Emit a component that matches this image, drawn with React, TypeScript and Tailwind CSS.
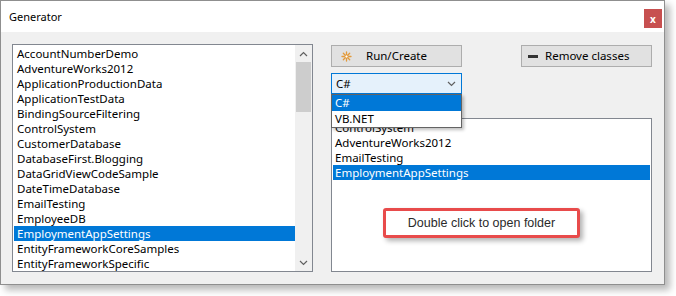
const leftItems = [
  "AccountNumberDemo",
  "AdventureWorks2012",
  "ApplicationProductionData",
  "ApplicationTestData",
  "BindingSourceFiltering",
  "ControlSystem",
  "CustomerDatabase",
  "DatabaseFirst.Blogging",
  "DataGridViewCodeSample",
  "DateTimeDatabase",
  "EmailTesting",
  "EmployeeDB",
  "EmploymentAppSettings",
  "EntityFrameworkCoreSamples",
  "EntityFrameworkSpecific",
];

const rightItems = ["ControlSystem", "AdventureWorks2012", "EmailTesting", "EmploymentAppSettings"];

const SELECTED = "EmploymentAppSettings";

const Chevron = ({ up = false }: { up?: boolean }) => (
  <svg width="9" height="6" viewBox="0 0 9 6" className={up ? "rotate-180" : ""}>
    <path d="M1 1 L4.5 4.5 L8 1" fill="none" stroke="#606060" strokeWidth="1.2" />
  </svg>
);

const Spark = () => (
  <svg width="11" height="11" viewBox="0 0 11 11">
    <g stroke="#e39a3b" strokeWidth="1.3" strokeLinecap="round">
      <path d="M5.5 1 V10" />
      <path d="M1 5.5 H10" />
      <path d="M2.3 2.3 L8.7 8.7" />
      <path d="M8.7 2.3 L2.3 8.7" />
    </g>
    <circle cx="5.5" cy="5.5" r="1.6" fill="#fff" stroke="#e39a3b" strokeWidth="1" />
  </svg>
);

export default function App() {
  return (
    <div className="w-[676px] h-[296px] bg-white font-['Noto_Sans',sans-serif] text-[11.5px] text-black">
      <div className="w-[665px] h-[285px] flex flex-col border border-[#8f8f8f] bg-white shadow-[5px_5px_7px_rgba(0,0,0,0.28)]">
        {/* title bar */}
        <div className="h-[31px] flex items-center justify-between pl-[8px] pr-[2px]">
          <span className="text-[11px] mt-[2px]">Generator</span>
          <div className="w-[18px] h-[19px] mt-[4px] bg-[#c75050] flex items-center justify-center text-white text-[10px] font-bold leading-none">
            x
          </div>
        </div>

        {/* body */}
        <div className="flex-1 bg-[#f0f0f0] flex pl-[11px] pt-[12px]">
          {/* left list */}
          <div className="w-[301px] h-[228px] border border-[#828790] bg-white flex">
            <div className="flex-1 flex flex-col pt-px pl-px">
              {leftItems.map((name) => (
                <div
                  key={name}
                  className={`h-[15px] leading-[15px] pl-[3px] whitespace-nowrap ${
                    name === SELECTED ? "bg-[#0078d7] text-white" : ""
                  }`}
                >
                  {name}
                </div>
              ))}
            </div>
            <div className="w-[17px] bg-[#f0f0f0] flex flex-col items-center">
              <div className="h-[17px] flex items-center justify-center">
                <Chevron up />
              </div>
              <div className="w-[15px] h-[50px] bg-[#cdcdcd]" />
              <div className="flex-1" />
              <div className="h-[17px] flex items-center justify-center">
                <Chevron />
              </div>
            </div>
          </div>

          {/* right column */}
          <div className="ml-[18px] w-[321px] flex flex-col relative">
            <div className="flex justify-between mt-px">
              <button className="w-[131px] h-[22px] bg-[#e1e1e1] border border-[#adadad] flex items-center pl-[9px]">
                <Spark />
                <span className="ml-[14px]">Run/Create</span>
              </button>
              <button className="w-[131px] h-[22px] bg-[#e1e1e1] border border-[#adadad] flex items-center pl-[6px]">
                <span className="w-[10px] h-[3px] bg-[#333]" />
                <span className="ml-[7px]">Remove classes</span>
              </button>
            </div>

            <div className="mt-[6px] w-[131px] h-[21px] border border-[#0078d7] bg-[#e5f1fb] flex items-center justify-between pl-[4px] pr-[5px]">
              <span>C#</span>
              <Chevron />
            </div>

            <div className="mt-[24px] h-[154px] border border-[#828790] bg-white relative">
              <div className="flex flex-col pt-px pl-px pr-px">
                {rightItems.map((name) => (
                  <div
                    key={name}
                    className={`h-[15px] leading-[15px] pl-[2px] whitespace-nowrap ${
                      name === SELECTED ? "bg-[#0078d7] text-white" : ""
                    }`}
                  >
                    {name}
                  </div>
                ))}
              </div>
              <div className="absolute left-[51px] top-[89px] w-[197px] h-[30px] rounded-[3px] border-[3px] border-[#e84b4b] bg-white shadow-[3px_3px_5px_rgba(0,0,0,0.3)] flex items-center justify-center font-['Liberation_Sans',sans-serif] text-[12.5px] text-[#2a2a2a]">
                Double click to open folder
              </div>
            </div>

            {/* open dropdown */}
            <div className="absolute left-0 top-[50px] w-[131px] border border-[#646464] bg-white shadow-[2px_2px_3px_rgba(0,0,0,0.25)] flex flex-col">
              <div className="h-[16px] leading-[16px] pl-[3px] bg-[#0078d7] text-white">C#</div>
              <div className="h-[16px] leading-[16px] pl-[3px]">VB.NET</div>
            </div>
          </div>
        </div>
      </div>
    </div>
  );
}
